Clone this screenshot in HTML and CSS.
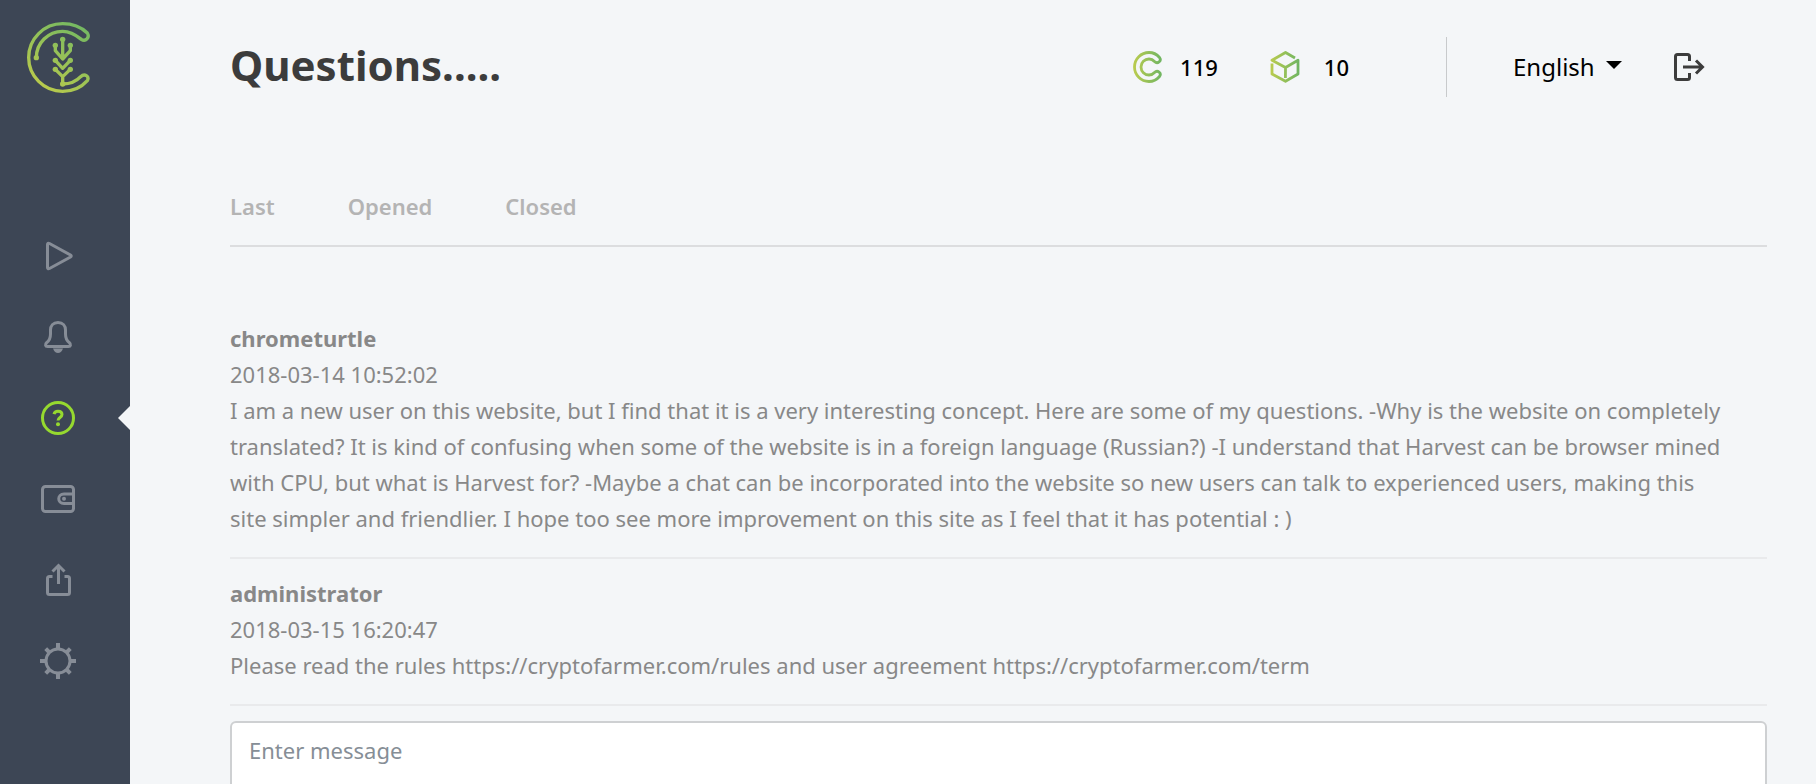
FILE: index.html
```html
<!DOCTYPE html>
<html lang="en">
<head>
    <meta charset="utf-8">
    <meta name="viewport" content="width=device-width, initial-scale=1">
    <title>Questions</title>
    <link rel="stylesheet" href="styles.css">
</head>
<body>
    <aside class="sidebar">
        <a href="#" class="logo" aria-label="Home">
            <svg width="63" height="71" viewBox="81 66 189 213">
                <defs>
                    <linearGradient id="logoGradient" gradientUnits="userSpaceOnUse" x1="110" y1="265" x2="240" y2="80">
                        <stop offset="0" stop-color="#bccb4b"/>
                        <stop offset="1" stop-color="#76b962"/>
                    </linearGradient>
                </defs>
                <g fill="none" stroke="url(#logoGradient)" stroke-width="10" stroke-linejoin="round">
                    <path d="M109 173A79 79 0 0 1 188 94C212 94 228 105 244 118C257 127 270 112 262 99C242 80 216 71 188 71A102 101.500 0 0 0 188 274C220 274 246 260 262 242C269 229 254 219 242 230C228 245 210 252 188 252"/>
                    <path d="M188.1 118L188 178M166 136V152L188 177L211 152V136M166 181L188 205L211 181M166 208L188 230L211 208M188.1 228L188 252"/>
                </g>
                <g fill="url(#logoGradient)">
                    <circle cx="109" cy="173" r="8"/>
                    <circle cx="188" cy="118" r="8"/>
                    <circle cx="166" cy="136" r="8"/>
                    <circle cx="211" cy="136" r="8"/>
                    <circle cx="166" cy="181" r="8"/>
                    <circle cx="211" cy="181" r="8"/>
                    <circle cx="166" cy="208" r="8"/>
                    <circle cx="211" cy="208" r="8"/>
                    <circle cx="188" cy="252" r="8"/>
                </g>
            </svg>
        </a>

        <nav class="menu">
            <a href="#" class="menu-item" aria-label="Start">
                <svg class="icon" viewBox="0 0 36 36">
                    <path d="M7.500 6.500V29.500Q7.500 31.500 9.500 30.500L30.500 19Q32 18 30.500 17L9.500 5.500Q7.500 4.500 7.500 6.500Z"/>
                </svg>
            </a>
            <a href="#" class="menu-item" aria-label="Notifications">
                <svg class="icon" viewBox="0 0 36 36">
                    <path d="M18 3.500C13 3.500 10.500 7 10.500 11V15C10.500 19 9.500 21.500 6.800 23.500C4.500 25.500 5.500 27.500 7.500 27.500H28.500C30.500 27.500 31.500 25.500 29.200 23.500C26.500 21.500 25.500 19 25.500 15V11C25.500 7 23 3.500 18 3.500Z"/>
                    <path class="solid" d="M13 29.500H23C22 32.500 20 34 18 34S14 32.500 13 29.500Z"/>
                </svg>
            </a>
            <a href="#" class="menu-item active" aria-label="Questions">
                <svg class="icon" viewBox="0 0 36 36">
                    <circle cx="18" cy="18" r="15.500"/>
                    <path d="M14 14.200C14.500 12 16 11.200 18 11.200C20.300 11.200 22 12.400 22 14.500C22 17.500 18 17.500 18 20.500"/>
                    <circle class="solid" cx="18" cy="24.200" r="2"/>
                </svg>
            </a>
            <a href="#" class="menu-item" aria-label="Wallet">
                <svg class="icon" viewBox="0 0 36 36">
                    <rect x="2.500" y="5.500" width="31" height="25" rx="3"/>
                    <path d="M33 13H24C17 13 17 22.500 24 22.500H33"/>
                    <circle class="solid" cx="24" cy="17.800" r="2"/>
                </svg>
            </a>
            <a href="#" class="menu-item" aria-label="Share">
                <svg class="icon" viewBox="0 0 36 36">
                    <path d="M12.500 14.500H9.500Q7.500 14.500 7.500 16.500V30.500Q7.500 32.500 9.500 32.500H27.500Q29.500 32.500 29.500 30.500V16.500Q29.500 14.500 27.500 14.500H24.500M18.500 22V4.500M12.500 9.500L18.500 3.500L24.500 9.500"/>
                </svg>
            </a>
            <a href="#" class="menu-item" aria-label="Settings">
                <svg class="icon" viewBox="0 0 36 36">
                    <circle cx="18" cy="18" r="12"/>
                    <path class="teeth" d="M18 0V5M18 31V36M0 18H5M31 18H36M5.700 5.700L9.500 9.500M26.500 26.500L30.300 30.300M30.300 5.700L26.500 9.500M9.500 26.500L5.700 30.300"/>
                </svg>
            </a>
        </nav>
    </aside>

    <main class="content">
        <header class="header">
            <h1>Questions.....</h1>

            <div class="balance">
                <svg width="30" height="32" viewBox="0 0 30 32">
                    <defs>
                        <linearGradient id="balanceGradient" gradientUnits="userSpaceOnUse" x1="1" y1="16" x2="29" y2="16">
                            <stop offset="0" stop-color="#b9cb4f"/>
                            <stop offset="1" stop-color="#6fb562"/>
                        </linearGradient>
                    </defs>
                    <path fill="none" stroke="url(#balanceGradient)" stroke-width="2.800" d="M26.500 6.500C23.500 3 20 1.500 16 1.500A14.500 14.500 0 0 0 16 30.500C20 30.500 23.500 29 26.500 25.500C29 22 24.500 18.500 21.500 21.500C20 23.200 18 24 16 24A8 8 0 0 1 16 8C18 8 20 8.800 21.500 10.500C24.500 13.500 29 10 26.500 6.500Z"/>
                </svg>
                <span>119</span>
            </div>
            <div class="balance balance-box">
                <svg width="30" height="32" viewBox="0 0 30 32">
                    <path fill="none" stroke="url(#balanceGradient)" stroke-width="2.800" stroke-linejoin="round" d="M25 7L15.500 1.500L2 9.300L15.500 16.500L28 9.300V23L15.500 30.300L2 23V12.500M15.500 16L15.400 27"/>
                </svg>
                <span>10</span>
            </div>

            <div class="account">
                <label class="language">
                    <select aria-label="Language">
                        <option>English</option>
                    </select>
                    <svg class="caret" width="16" height="8" viewBox="0 0 16 8"><path d="M0 0H16L8 8Z"/></svg>
                </label>
                <button type="button" class="logout" aria-label="Log out">
                    <svg width="31" height="28" viewBox="0 0 31 28">
                        <path d="M15.500 8V3.500Q15.500 1.500 13.500 1.500H3.500Q1.500 1.500 1.500 3.500V24.500Q1.500 26.500 3.500 26.500H13.500Q15.500 26.500 15.500 24.500V20M9 14H28M22 7.500L28.500 14L22 20.500"/>
                    </svg>
                </button>
            </div>
        </header>

        <nav class="tabs">
            <a href="#">Last</a>
            <a href="#">Opened</a>
            <a href="#">Closed</a>
        </nav>

        <section class="messages">
            <article class="message">
                <h2>chrometurtle</h2>
                <time>2018-03-14 10:52:02</time>
                <p>I am a new user on this website, but I find that it is a very interesting concept. Here are some of my questions. -Why is the website on completely translated? It is kind of confusing when some of the website is in a foreign language (Russian?) -I understand that Harvest can be browser mined with CPU, but what is Harvest for? -Maybe a chat can be incorporated into the website so new users can talk to experienced users, making this site simpler and friendlier. I hope too see more improvement on this site as I feel that it has potential : )</p>
            </article>
            <article class="message">
                <h2>administrator</h2>
                <time>2018-03-15 16:20:47</time>
                <p>Please read the rules https://cryptofarmer.com/rules and user agreement https://cryptofarmer.com/term</p>
            </article>
        </section>

        <form>
            <textarea class="reply" rows="4" placeholder="Enter message" aria-label="Enter message"></textarea>
        </form>
    </main>
</body>
</html>
```
FILE: styles.css
```css
* {
    box-sizing: border-box;
}

html {
    height: 100%;
}

body {
    display: flex;
    height: 100%;
    margin: 0;
    overflow: hidden;
    background: #f4f6f8;
    color: #888;
    font-family: "Segoe UI", "Noto Sans", "Open Sans", sans-serif;
    font-size: 22px;
    line-height: 36px;
}

a {
    color: inherit;
    text-decoration: none;
}

h1, h2, p {
    margin: 0;
}

/* Sidebar */
.sidebar {
    flex: none;
    width: 130px;
    background: #3d4655;
}

.logo {
    display: block;
    height: 71px;
    margin: 22px 0 122px 27px;
}

.logo svg {
    display: block;
}

.menu {
    display: flex;
    flex-direction: column;
}

.menu-item {
    position: relative;
    display: flex;
    align-items: center;
    height: 81px;
    padding-left: 40px;
    color: #878d97;
}

.menu-item.active {
    color: #96d92f;
}

/* notch pointing from the page to the current item */
.menu-item.active::after {
    content: "";
    position: absolute;
    right: 0;
    border: 12px solid transparent;
    border-left: 0;
    border-right-color: #f4f6f8;
}

.icon {
    width: 36px;
    height: 36px;
    fill: none;
    stroke: currentColor;
    stroke-width: 3;
}

.icon .solid {
    fill: currentColor;
    stroke: none;
}

.icon .teeth {
    stroke-width: 4;
}

/* Page */
.content {
    flex: 1;
    min-width: 0;
    padding: 37px 49px 0 100px;
    overflow: hidden;
}

.header {
    display: flex;
    align-items: center;
    height: 60px;
    padding-right: 62px;
    color: #000;
}

.header h1 {
    margin-right: auto;
    padding-bottom: 4px;
    color: #3c3c3c;
    font-size: 42px;
    font-weight: 700;
    line-height: 56px;
}

.balance {
    display: flex;
    align-items: center;
    gap: 17px;
    margin-right: 52px;
    font-weight: 500;
}

.balance-box {
    gap: 24px;
    margin-right: 97px;
}

.account {
    display: flex;
    align-items: center;
    height: 60px;
    padding-left: 66px;
    border-left: 1px solid #c8cacc;
}

.language {
    position: relative;
    margin-right: 52px;
}

.language select {
    display: block;
    appearance: none;
    padding: 0 27px 0 0;
    border: 0;
    background: transparent;
    color: #000;
    font: inherit;
    font-size: 24px;
}

.caret {
    position: absolute;
    top: 12px;
    right: 0;
    pointer-events: none;
}

.logout {
    padding: 0;
    border: 0;
    background: none;
    cursor: pointer;
}

.logout svg {
    display: block;
    fill: none;
    stroke: #3c3c3c;
    stroke-width: 3;
}

.tabs {
    display: flex;
    gap: 73px;
    margin-top: 91px;
    padding-bottom: 21px;
    border-bottom: 2px solid #dcdddf;
    color: #b4b4b4;
    font-weight: 600;
}

.messages {
    padding-top: 57px;
}

.message {
    padding: 16px 0 21px;
    border-bottom: 2px solid #e9eaec;
}

.message h2 {
    font-size: 22px;
    font-weight: 700;
    line-height: 36px;
}

.message time {
    display: block;
}

.message p {
    padding-right: 38px;
}

.reply {
    display: block;
    width: 100%;
    margin-top: 15px;
    padding: 9px 17px;
    border: 2px solid #ced0d2;
    border-radius: 6px;
    background: #fff;
    color: #495057;
    font: inherit;
    resize: none;
}

.reply::placeholder {
    color: #868e96;
    opacity: 1;
}
```
